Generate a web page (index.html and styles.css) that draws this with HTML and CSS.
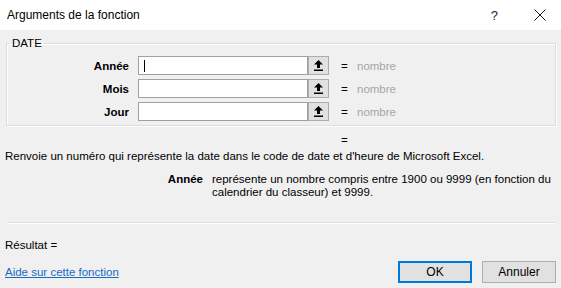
FILE: index.html
```html
<!DOCTYPE html>
<html lang="fr">
<head>
<meta charset="utf-8">
<title>Arguments de la fonction</title>
<link rel="stylesheet" href="styles.css">
</head>
<body>
<div class="dialog">
  <div class="titlebar">
    <span class="title">Arguments de la fonction</span>
    <span class="help">?</span>
    <svg class="close" width="12" height="12" viewBox="0 0 12 12"><path d="M0.5 0.5 L11.5 11.5 M11.5 0.5 L0.5 11.5" stroke="#1a1a1a" stroke-width="1" fill="none"/></svg>
  </div>
  <div class="body">
    <fieldset class="group">
      <legend>DATE</legend>
      <div class="args">
        <label class="arg-label">Année</label>
        <div class="field focused"><span class="caret"></span></div>
        <div class="refbtn"><svg width="9" height="11" viewBox="0 0 9 11"><path d="M4.5 0 L9 4.5 L6 4.5 L6 8 L3 8 L3 4.5 L0 4.5 Z" fill="#000"/><rect x="0" y="9.5" width="9" height="1.5" fill="#000"/></svg></div>
        <span class="eq">=</span>
        <span class="val">nombre</span>

        <label class="arg-label">Mois</label>
        <div class="field"></div>
        <div class="refbtn"><svg width="9" height="11" viewBox="0 0 9 11"><path d="M4.5 0 L9 4.5 L6 4.5 L6 8 L3 8 L3 4.5 L0 4.5 Z" fill="#000"/><rect x="0" y="9.5" width="9" height="1.5" fill="#000"/></svg></div>
        <span class="eq">=</span>
        <span class="val">nombre</span>

        <label class="arg-label">Jour</label>
        <div class="field"></div>
        <div class="refbtn"><svg width="9" height="11" viewBox="0 0 9 11"><path d="M4.5 0 L9 4.5 L6 4.5 L6 8 L3 8 L3 4.5 L0 4.5 Z" fill="#000"/><rect x="0" y="9.5" width="9" height="1.5" fill="#000"/></svg></div>
        <span class="eq">=</span>
        <span class="val">nombre</span>
      </div>
    </fieldset>
    <div class="result-eq">=</div>
    <p class="desc">Renvoie un numéro qui représente la date dans le code de date et d'heure de Microsoft Excel.</p>
    <div class="argdesc">
      <span class="argdesc-name">Année</span>
      <span class="argdesc-text">représente un nombre compris entre 1900 ou 9999 (en fonction du calendrier du classeur) et 9999.</span>
    </div>
    <div class="sep"></div>
    <div class="result">Résultat =</div>
    <div class="footer">
      <a class="helplink" href="#">Aide sur cette fonction</a>
      <div class="buttons">
        <button class="btn primary">OK</button>
        <button class="btn">Annuler</button>
      </div>
    </div>
  </div>
</div>
</body>
</html>
```

FILE: styles.css
```css
* { box-sizing: border-box; }
html, body { margin: 0; padding: 0; }
body {
  width: 561px;
  height: 288px;
  overflow: hidden;
  background: #f0f0f0;
  font-family: "Segoe UI", "Liberation Sans", Arial, sans-serif;
  font-size: 11.5px;
  color: #000;
}
.dialog { width: 561px; height: 288px; display: flex; flex-direction: column; }
.titlebar {
  height: 30px;
  background: #fff;
  display: flex;
  align-items: center;
  padding-left: 7px;
  flex: none;
}
.title { font-size: 12px; color: #000; flex: 1; }
.help { font-size: 13px; color: #222; margin-right: 36px; }
.close { margin-right: 15px; }
.body { flex: 1; display: flex; flex-direction: column; padding: 7px 5px 0 5px; }
.group {
  margin: 0 0 0 1px;
  width: 550px;
  height: 89px;
  border: 1px solid #dcdcdc;
  box-shadow: inset 1px 1px 0 #fff, 1px 1px 0 #fff;
  padding: 7px 0 0 0;
  flex: none;
}
.group legend {
  padding: 0 2px;
  margin-left: 3px;
}
.args {
  display: grid;
  grid-template-columns: 131px 170px 21px 28px auto;
  justify-content: start;
  grid-auto-rows: 19px;
  row-gap: 4px;
  align-items: center;
}
.arg-label { font-weight: bold; text-align: right; padding-right: 9px; }
.field {
  height: 19px;
  background: #fff;
  border: 1px solid #a0a0a0;
  position: relative;
}
.caret {
  position: absolute;
  left: 5px; top: 3px;
  width: 1px; height: 12px;
  background: #000;
}
.refbtn {
  height: 19px;
  background: #e1e1e1;
  border: 1px solid #adadad;
  display: flex;
  align-items: center;
  justify-content: center;
}
.refbtn svg { display: block; }
.eq { padding-left: 12px; }
.val { color: #a5a5a5; }
.result-eq { margin: 8px 0 0 336px; height: 13px; line-height: 13px; }
.desc { margin: 2px 0 0 0; line-height: 15px; }
.argdesc { display: flex; margin-top: 9px; line-height: 13px; }
.argdesc-name { width: 198px; text-align: right; font-weight: bold; flex: none; }
.argdesc-text { padding-left: 9px; width: 352px; }
.sep {
  margin: 23px 0 0 2px;
  width: 549px;
  height: 2px;
  border-top: 1px solid #dcdcdc;
  border-bottom: 1px solid #fff;
  flex: none;
}
.result { margin-top: 14px; line-height: 15px; }
.footer { display: flex; align-items: center; margin-top: 8px; }
.helplink { color: #1a6ac4; text-decoration: underline; flex: 1; }
.buttons { display: flex; gap: 10px; margin-right: 0; }
.btn {
  width: 74px;
  height: 22px;
  background: #e1e1e1;
  border: 1px solid #adadad;
  font-family: inherit;
  font-size: 12px;
  color: #000;
  padding: 0;
}
.btn.primary { border: 2px solid #0078d7; }
```
